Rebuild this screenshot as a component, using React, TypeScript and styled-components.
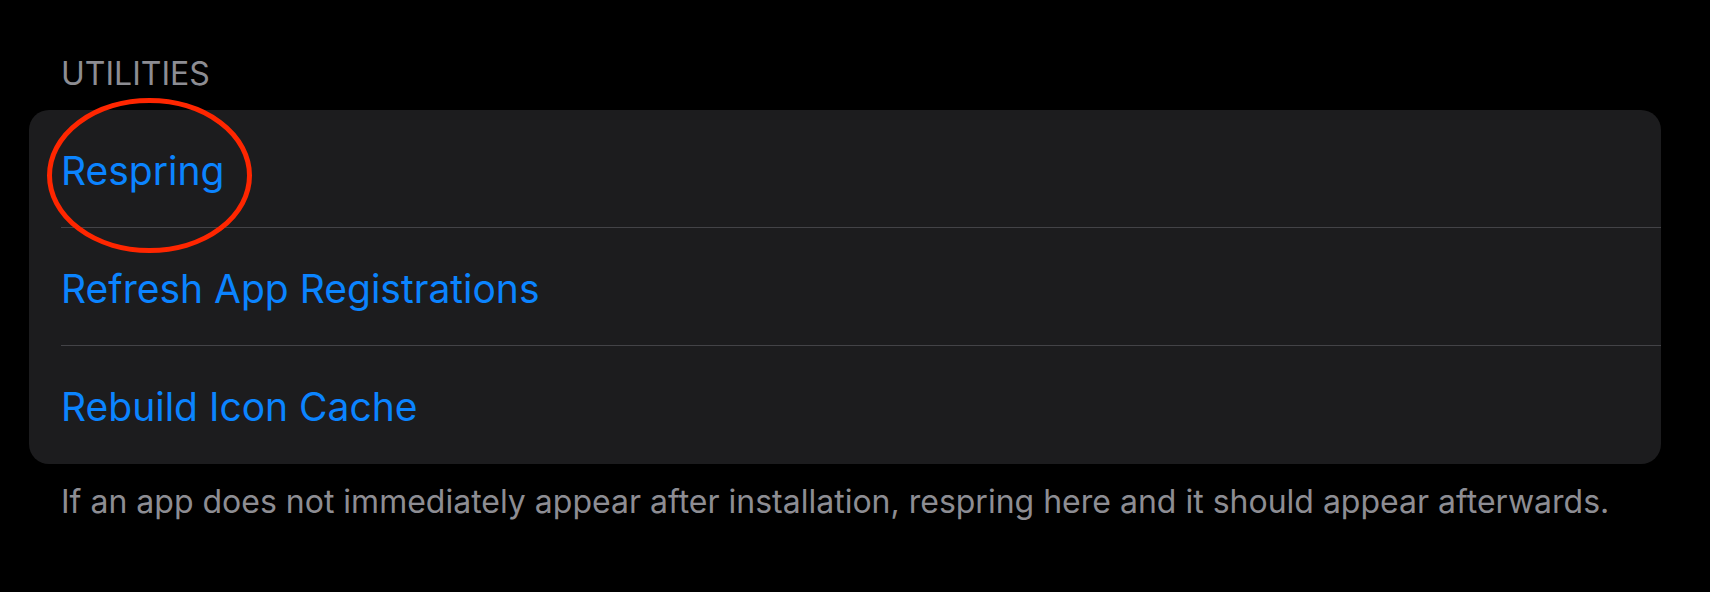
import React from "react";
import styled, { createGlobalStyle } from "styled-components";

const GlobalStyle = createGlobalStyle`
  * { box-sizing: border-box; }
  body {
    margin: 0;
    background: #000;
    font-family: Inter, "Liberation Sans", sans-serif;
  }
`;

const Page = styled.main`
  padding: 52px 49px 64px 29px;
`;

const Heading = styled.h2`
  margin: 0;
  padding: 0 32px;
  color: #8d8d93;
  font-size: 32px;
  line-height: 44px;
  font-weight: 400;
`;

const List = styled.ul`
  margin: 14px 0 16px;
  padding: 0;
  list-style: none;
  background: #1c1c1e;
  border-radius: 20px;
`;

const Row = styled.li`
  position: relative;
  padding-left: 32px;
`;

const Action = styled.button<{ $divided: boolean }>`
  display: block;
  width: 100%;
  height: 118px;
  padding: 4px 0 0;
  border: 0;
  border-bottom: 1px solid ${(p) => (p.$divided ? "#434347" : "transparent")};
  background: none;
  color: #0b84ff;
  font: inherit;
  font-size: 39px;
  line-height: 48px;
  text-align: left;
`;

const Ring = styled.svg`
  position: absolute;
  left: 17px;
  top: -13px;
  width: 208px;
  height: 157px;
  z-index: 1;
  pointer-events: none;
`;

const Note = styled.p`
  margin: 0;
  padding-left: 32px;
  color: #8d8d93;
  font-size: 32px;
  line-height: 44px;
`;

const actions = ["Respring", "Refresh App Registrations", "Rebuild Icon Cache"];

export default function App() {
  return (
    <>
      <GlobalStyle />
      <Page>
        <Heading>UTILITIES</Heading>
        <List>
          {actions.map((name, i) => (
            <Row key={name}>
              <Action type="button" $divided={i < actions.length - 1}>{name}</Action>
              {i === 0 && (
                <Ring viewBox="0 0 208 157" aria-hidden="true">
                  <ellipse cx="103.5" cy="78.5" rx="100" ry="75" fill="none" stroke="#ff2600" strokeWidth="5" />
                </Ring>
              )}
            </Row>
          ))}
        </List>
        <Note>If an app does not immediately appear after installation, respring here and it should appear afterwards.</Note>
      </Page>
    </>
  );
}
